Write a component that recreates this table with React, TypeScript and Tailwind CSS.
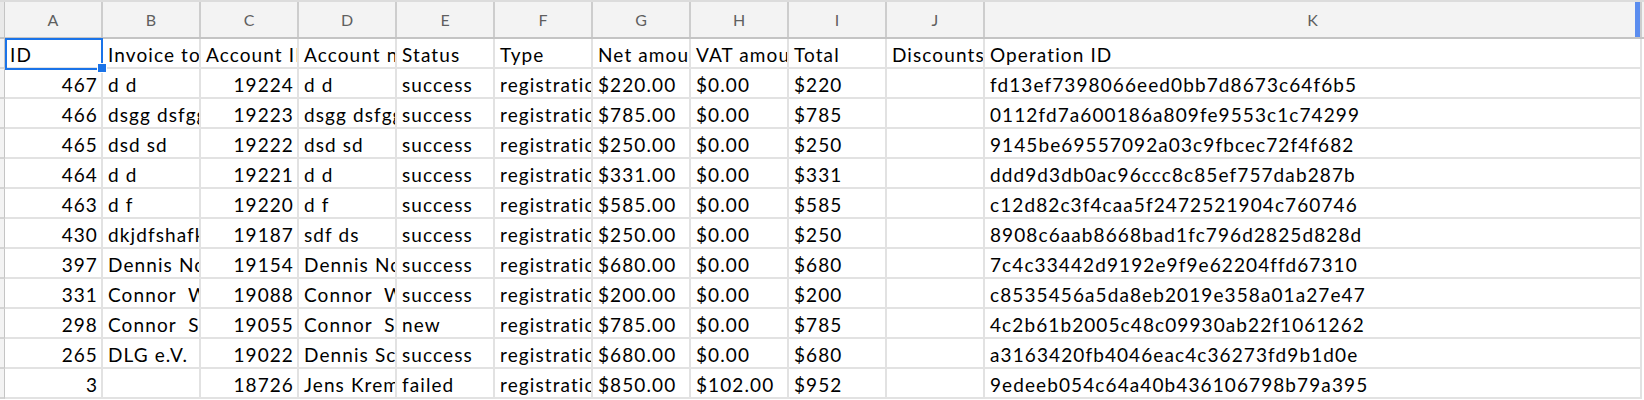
const columns = ['A', 'B', 'C', 'D', 'E', 'F', 'G', 'H', 'I', 'J'];

type Row = {
  id: string;
  invoiceTo: string;
  accountId: string;
  accountName: string;
  status: string;
  net: string;
  vat: string;
  total: string;
  operationId: string;
};

const rows: Row[] = [
  { id: '467', invoiceTo: 'd d', accountId: '19224', accountName: 'd d', status: 'success', net: '$220.00', vat: '$0.00', total: '$220', operationId: 'fd13ef7398066eed0bb7d8673c64f6b5' },
  { id: '466', invoiceTo: 'dsgg dsfggsd', accountId: '19223', accountName: 'dsgg dsfggsd', status: 'success', net: '$785.00', vat: '$0.00', total: '$785', operationId: '0112fd7a600186a809fe9553c1c74299' },
  { id: '465', invoiceTo: 'dsd sd', accountId: '19222', accountName: 'dsd sd', status: 'success', net: '$250.00', vat: '$0.00', total: '$250', operationId: '9145be69557092a03c9fbcec72f4f682' },
  { id: '464', invoiceTo: 'd d', accountId: '19221', accountName: 'd d', status: 'success', net: '$331.00', vat: '$0.00', total: '$331', operationId: 'ddd9d3db0ac96ccc8c85ef757dab287b' },
  { id: '463', invoiceTo: 'd f', accountId: '19220', accountName: 'd f', status: 'success', net: '$585.00', vat: '$0.00', total: '$585', operationId: 'c12d82c3f4caa5f2472521904c760746' },
  { id: '430', invoiceTo: 'dkjdfshafkljs', accountId: '19187', accountName: 'sdf ds', status: 'success', net: '$250.00', vat: '$0.00', total: '$250', operationId: '8908c6aab8668bad1fc796d2825d828d' },
  { id: '397', invoiceTo: 'Dennis Nowak', accountId: '19154', accountName: 'Dennis Nowak', status: 'success', net: '$680.00', vat: '$0.00', total: '$680', operationId: '7c4c33442d9192e9f9e62204ffd67310' },
  { id: '331', invoiceTo: 'Connor  Walsh', accountId: '19088', accountName: 'Connor  Walsh', status: 'success', net: '$200.00', vat: '$0.00', total: '$200', operationId: 'c8535456a5da8eb2019e358a01a27e47' },
  { id: '298', invoiceTo: 'Connor  Smith', accountId: '19055', accountName: 'Connor  Smith', status: 'new', net: '$785.00', vat: '$0.00', total: '$785', operationId: '4c2b61b2005c48c09930ab22f1061262' },
  { id: '265', invoiceTo: 'DLG e.V.', accountId: '19022', accountName: 'Dennis Schulz', status: 'success', net: '$680.00', vat: '$0.00', total: '$680', operationId: 'a3163420fb4046eac4c36273fd9b1d0e' },
  { id: '3', invoiceTo: '', accountId: '18726', accountName: 'Jens Kremer', status: 'failed', net: '$850.00', vat: '$102.00', total: '$952', operationId: '9edeeb054c64a40b436106798b79a395' },
];

function Cell({ children, right, wide }: { children?: string; right?: boolean; wide?: boolean }) {
  return (
    <div
      className={`${wide ? 'w-[657px]' : 'w-[98px]'} h-[30px] shrink-0 border-r-2 border-b-2 border-[#e2e2e2] flex items-end pb-[1px] overflow-hidden whitespace-pre ${right ? 'justify-end pr-[3px]' : 'pl-[5px]'}`}
    >
      {children}
    </div>
  );
}

function Gutter() {
  return <div className="w-[5px] h-[30px] shrink-0 bg-[#f3f3f3] border-r border-b-2 border-r-[#c4c4c4] border-b-[#d4d4d4]" />;
}

export default function App() {
  return (
    <div className="w-[1644px] h-[400px] bg-white overflow-hidden font-['Lato','Liberation_Sans',sans-serif] text-[19px] tracking-[1.1px] leading-[22px] text-black">
      <div className="relative">
        {/* column letters */}
        <div className="flex h-[39px] bg-[#f3f3f3] border-t-2 border-b-2 border-t-[#dcdcdc] border-b-[#c4c4c4] text-[16px] tracking-normal text-[#5f5f5f]">
          <div className="w-[5px] shrink-0 bg-[#e9e9e9] border-r border-[#c4c4c4]" />
          {columns.map((c) => (
            <div key={c} className="w-[98px] shrink-0 border-r-2 border-[#cdcdcd] flex items-center justify-center">
              {c}
            </div>
          ))}
          <div className="w-[657px] shrink-0 border-r-2 border-[#cdcdcd] flex items-center justify-center">K</div>
        </div>

        {/* row 1 headings */}
        <div className="flex">
          <Gutter />
          <Cell>ID</Cell>
          <Cell>Invoice to</Cell>
          <Cell>Account ID</Cell>
          <Cell>Account name</Cell>
          <Cell>Status</Cell>
          <Cell>Type</Cell>
          <Cell>Net amount</Cell>
          <Cell>VAT amount</Cell>
          <Cell>Total</Cell>
          <Cell>Discounts</Cell>
          <Cell wide>Operation ID</Cell>
        </div>

        {rows.map((r) => (
          <div key={r.id} className="flex">
            <Gutter />
            <Cell right>{r.id}</Cell>
            <Cell>{r.invoiceTo}</Cell>
            <Cell right>{r.accountId}</Cell>
            <Cell>{r.accountName}</Cell>
            <Cell>{r.status}</Cell>
            <Cell>registration</Cell>
            <Cell>{r.net}</Cell>
            <Cell>{r.vat}</Cell>
            <Cell>{r.total}</Cell>
            <Cell />
            <Cell wide>{r.operationId}</Cell>
          </div>
        ))}

        {/* active cell A2 */}
        <div className="absolute left-[5px] top-[38px] w-[98px] h-[32px] border-2 border-[#1a73e8]">
          <div className="absolute left-[90px] top-[23px] w-[10px] h-[10px] bg-[#1a73e8] border border-white" />
        </div>

        {/* column edge marker */}
        <div className="absolute left-[1635px] top-[2px] w-[5px] h-[35px] bg-[#5b8def]" />
      </div>
    </div>
  );
}
